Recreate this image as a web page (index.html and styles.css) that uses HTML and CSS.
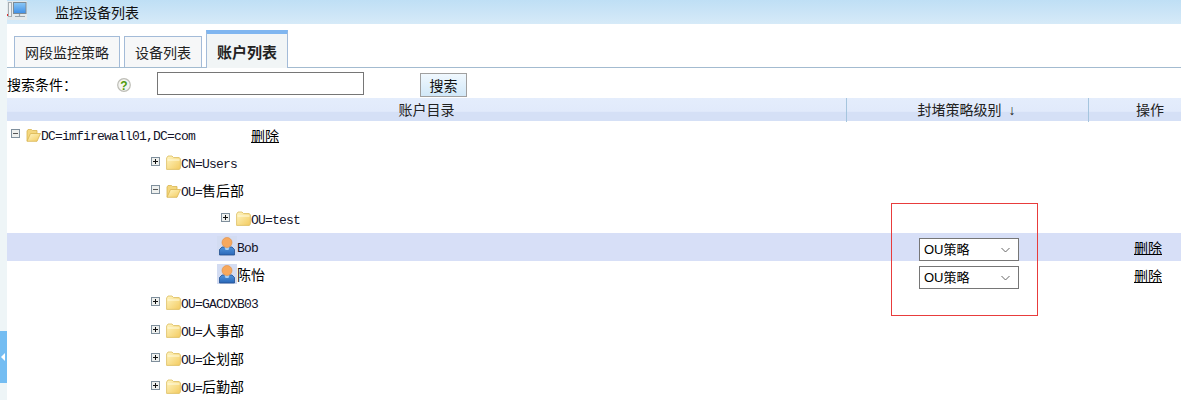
FILE: index.html
```html
<!DOCTYPE html>
<html lang="zh-CN">
<head>
  <meta charset="UTF-8">
  <title>监控设备列表</title>
  <link rel="stylesheet" href="styles.css">
</head>
<body>
  <svg class="defs" width="0" height="0">
    <defs>
      <linearGradient id="folderFill" x1="0" y1="0" x2="1" y2="1">
        <stop offset="0" stop-color="#fff6c4"/>
        <stop offset="1" stop-color="#f3cb60"/>
      </linearGradient>
      <linearGradient id="bodyFill" x1="0" y1="0" x2="0" y2="1">
        <stop offset="0" stop-color="#4f93dc"/>
        <stop offset="1" stop-color="#2a68b8"/>
      </linearGradient>
      <linearGradient id="screenFill" x1="0" y1="0" x2="0" y2="1">
        <stop offset="0" stop-color="#8cc8f6"/>
        <stop offset="1" stop-color="#3f8fe6"/>
      </linearGradient>
      <symbol id="i-plus" viewBox="0 0 9 9">
        <rect x="0.5" y="0.5" width="8" height="8" fill="#eef0ee" stroke="#7f8f9c"/>
        <path d="M2 4.500h5M4.500 2v5" stroke="#111" fill="none"/>
      </symbol>
      <symbol id="i-minus" viewBox="0 0 9 9">
        <rect x="0.5" y="0.5" width="8" height="8" fill="#eef0ee" stroke="#7f8f9c"/>
        <path d="M2 4.500h5" stroke="#555" fill="none"/>
      </symbol>
      <symbol id="i-folder" viewBox="0 0 15 15">
        <path d="M.6 14.400V3L2 1h4l1.500 1.500H13l1.400 1.200V13l-1 1.400z" fill="url(#folderFill)" stroke="#dcbc5e" stroke-width=".8"/>
        <path d="M1.500 5h12" stroke="#fffbe0" fill="none"/>
      </symbol>
      <symbol id="i-open" viewBox="0 0 15 15">
        <path d="M1 14V4l1-1.500h3.500l1 1H11v3" fill="#f4d77e" stroke="#d9b552" stroke-width=".8"/>
        <path d="M1 14.300L4.500 6.500h10l-3.500 7.800z" fill="url(#folderFill)" stroke="#d9b552" stroke-width=".8"/>
      </symbol>
      <symbol id="i-user" viewBox="0 0 20 20">
        <rect width="20" height="20" fill="#d3dcf2"/>
        <path d="M2.500 19v-5.500l2.500-2.500h10l2.500 2.500V19z" fill="url(#bodyFill)" stroke="#234f8e" stroke-width=".8"/>
        <path d="M7.500 11h5l-1 3h-3z" fill="#a8cdf0"/>
        <circle cx="10" cy="6.500" r="5" fill="#f7a95e" stroke="#e08c3e" stroke-width=".6"/>
      </symbol>
    </defs>
  </svg>

  <div class="side">
    <span class="side-tab"><span class="side-arrow"></span></span>
  </div>

  <div class="main">
    <div class="head">
      <svg class="head-icon" width="20" height="20" viewBox="0 0 20 20">
        <rect x="0" y="1" width="20" height="19" fill="#e3e9ec"/>
        <rect x="1.500" y="2.500" width="3" height="14" fill="#f1f2f2" stroke="#a5adb2"/>
        <rect x="0" y="14" width="1" height="2" fill="#d33"/>
        <rect x="6.500" y="2.500" width="12.500" height="11" fill="url(#screenFill)" stroke="#7d8b96"/>
        <path d="M12.500 14v2M8 16.500h10" stroke="#9aa4ab" stroke-width="1.200" fill="none"/>
      </svg>
      <span class="head-title">监控设备列表</span>
    </div>

    <div class="tabs">
      <a class="tab tab-wide">网段监控策略</a>
      <a class="tab">设备列表</a>
      <a class="tab tab-on">账户列表</a>
    </div>

    <form class="search">
      <label class="search-label">搜索条件：</label>
      <svg class="help" width="14" height="14" viewBox="0 0 14 14">
        <circle cx="7" cy="7" r="6.300" fill="#f4f4f0" stroke="#bdbdb6" stroke-width="1.200"/>
        <text x="7" y="11.500" class="help-mark">?</text>
      </svg>
      <input class="search-input" type="text">
      <button class="search-btn" type="button">搜索</button>
    </form>

    <div class="grid grid-head">
      <div class="th">账户目录</div>
      <div class="th th-level">封堵策略级别<span class="sort">↓</span></div>
      <div class="th th-action">操作</div>
    </div>

    <div class="grid row">
      <div class="node lv0">
        <svg class="exp"><use href="#i-minus"/></svg><svg class="folder"><use href="#i-open"/></svg><span class="name">DC=imfirewall01,DC=com</span>
        <a class="del del-root">删除</a>
      </div>
    </div>
    <div class="grid row">
      <div class="node lv1">
        <svg class="exp"><use href="#i-plus"/></svg><svg class="folder"><use href="#i-folder"/></svg><span class="name">CN=Users</span>
      </div>
    </div>
    <div class="grid row">
      <div class="node lv1">
        <svg class="exp"><use href="#i-minus"/></svg><svg class="folder"><use href="#i-open"/></svg><span class="name">OU=<span class="cn">售后部</span></span>
      </div>
    </div>
    <div class="grid row">
      <div class="node lv2">
        <svg class="exp"><use href="#i-plus"/></svg><svg class="folder"><use href="#i-folder"/></svg><span class="name">OU=test</span>
      </div>
    </div>
    <div class="grid row row-on">
      <div class="node lv-user">
        <svg class="user"><use href="#i-user"/></svg><span class="name">Bob</span>
      </div>
      <div class="level">
        <select class="policy"><option>OU策略</option></select>
      </div>
      <div class="action"><a class="del">删除</a></div>
    </div>
    <div class="grid row">
      <div class="node lv-user">
        <svg class="user"><use href="#i-user"/></svg><span class="name"><span class="cn">陈怡</span></span>
      </div>
      <div class="level">
        <select class="policy"><option>OU策略</option></select>
      </div>
      <div class="action"><a class="del">删除</a></div>
    </div>
    <div class="grid row">
      <div class="node lv1">
        <svg class="exp"><use href="#i-plus"/></svg><svg class="folder"><use href="#i-folder"/></svg><span class="name">OU=GACDXB03</span>
      </div>
    </div>
    <div class="grid row">
      <div class="node lv1">
        <svg class="exp"><use href="#i-plus"/></svg><svg class="folder"><use href="#i-folder"/></svg><span class="name">OU=<span class="cn">人事部</span></span>
      </div>
    </div>
    <div class="grid row">
      <div class="node lv1">
        <svg class="exp"><use href="#i-plus"/></svg><svg class="folder"><use href="#i-folder"/></svg><span class="name">OU=<span class="cn">企划部</span></span>
      </div>
    </div>
    <div class="grid row">
      <div class="node lv1">
        <svg class="exp"><use href="#i-plus"/></svg><svg class="folder"><use href="#i-folder"/></svg><span class="name">OU=<span class="cn">后勤部</span></span>
      </div>
    </div>

    <!-- red box drawn over the screenshot -->
    <div class="mark"></div>
  </div>
</body>
</html>
```

FILE: styles.css
```css
html, body {
  margin: 0;
  padding: 0;
  height: 400px;
  overflow: hidden;
}
body {
  display: flex;
  background-color: white;
  color: #000;
  font-family: "Noto Sans CJK SC", "Liberation Sans", sans-serif;
  font-size: 14px;
}
.defs {
  position: absolute;
}
.side {
  width: 7px;
  flex-shrink: 0;
  padding-top: 331px;
  box-sizing: border-box;
  background-color: #eef5f7;
}
.side-tab {
  display: flex;
  align-items: center;
  height: 52px;
  background-color: #74bdf2;
}
.side-arrow {
  width: 0;
  height: 0;
  margin-left: 1px;
  border-top: 4px solid transparent;
  border-bottom: 4px solid transparent;
  border-right: 4px solid white;
}
.main {
  position: relative;
  flex: 1;
  min-width: 0;
  overflow: hidden;
}
.head {
  display: flex;
  align-items: center;
  height: 24px;
  background: linear-gradient(#bfdff5, #d6eaf8);
}
.head-icon {
  flex-shrink: 0;
  align-self: flex-start;
}
.head-title {
  margin-left: 28px;
  line-height: 24px;
  color: #111;
}
.tabs {
  display: flex;
  align-items: flex-end;
  gap: 4px;
  height: 44px;
  padding-left: 7px;
  box-sizing: border-box;
  border-bottom: 1px solid #a3bbd0;
}
.tab {
  width: 78px;
  height: 31px;
  box-sizing: border-box;
  border: 1px solid #a3bbd8;
  border-bottom: none;
  background-color: #f6f7f8;
  text-align: center;
  line-height: 30px;
  color: #222;
}
.tab-wide {
  width: 106px;
}
.tab-on {
  width: 82px;
  height: 38px;
  margin-bottom: -1px;
  border-top: 4px solid #7fb6f0;
  background-color: #f1f5f6;
  font-size: 15px;
  font-weight: bold;
  line-height: 36px;
}
.search {
  display: flex;
  align-items: center;
  height: 30px;
  margin: 0;
}
.search-label {
  width: 110px;
  padding-top: 2px;
}
.help {
  margin-top: 3px;
}
.help-mark {
  font-family: "Liberation Sans", sans-serif;
  font-size: 12px;
  font-weight: bold;
  fill: #4f9a0c;
  text-anchor: middle;
}
.search-input {
  width: 207px;
  height: 23px;
  box-sizing: border-box;
  margin-left: 26px;
  padding: 1px 2px;
  border: 1px solid #767676;
  background-color: white;
}
.search-btn {
  width: 47px;
  height: 24px;
  margin: 3px 0 0 56px;
  padding: 0;
  border: 1px solid #a0a0a0;
  background: linear-gradient(#f0f8fe, #d2e8f8);
  font-family: inherit;
  font-size: 14px;
  color: #111;
}
.grid {
  display: grid;
  grid-template-columns: 840px 242px 92px;
}
.grid-head {
  height: 23px;
  background: linear-gradient(#e4edfc 0, #e1eafb 58%, #d5e0f6 62%, #d5e0f6 100%);
}
.th {
  line-height: 23px;
  text-align: center;
  color: #222;
  border-right: 1px solid #a5c5de;
}
.th-level {
  padding-right: 2px;
}
.th-action {
  border-right: none;
  text-align: left;
  padding-left: 47px;
}
.sort {
  margin-left: 7px;
  font-family: "Liberation Sans", sans-serif;
  font-size: 14px;
  font-weight: bold;
}
.row {
  height: 28px;
}
.row-on {
  background-color: #d7dff7;
}
.node {
  display: flex;
  align-items: center;
  height: 28px;
}
.lv0 {
  padding-left: 4px;
}
.lv1 {
  padding-left: 144px;
}
.lv2 {
  padding-left: 214px;
}
.lv-user {
  padding-left: 210px;
}
.exp {
  width: 9px;
  height: 9px;
  margin: -3px 6px 0 0;
  flex-shrink: 0;
}
.folder {
  width: 15px;
  height: 15px;
  margin-top: -2px;
  flex-shrink: 0;
}
.user {
  width: 20px;
  height: 20px;
  margin-top: -3px;
  flex-shrink: 0;
}
.name {
  margin-top: 3px;
  font-family: "Liberation Mono", "Noto Sans CJK SC", monospace;
  font-size: 13px;
  letter-spacing: -0.8px;
  line-height: 28px;
  color: #14142a;
  white-space: nowrap;
}
.cn {
  font-family: "Noto Sans CJK SC", sans-serif;
  font-size: 14px;
  letter-spacing: 0;
  line-height: 20px;
  color: #000;
}
.del {
  font-size: 14px;
  text-decoration: underline;
  color: #000;
}
.del-root {
  margin-left: 56px;
}
.level {
  display: flex;
  align-items: flex-end;
  padding-left: 72px;
}
.action {
  padding-left: 45px;
  line-height: 28px;
}
.policy {
  appearance: none;
  width: 100px;
  height: 23px;
  box-sizing: border-box;
  padding: 0 0 0 4px;
  border: 1px solid #767676;
  border-radius: 0;
  background: white url("data:image/svg+xml,%3Csvg xmlns='http://www.w3.org/2000/svg' width='9' height='6'%3E%3Cpath d='M.5 1l4 4 4-4' fill='none' stroke='%23666'/%3E%3C/svg%3E") no-repeat right 8px center;
  font-family: "Liberation Sans", "Noto Sans CJK SC", sans-serif;
  font-size: 13px;
  color: #000;
}
.mark {
  position: absolute;
  left: 884px;
  top: 203px;
  width: 145px;
  height: 111px;
  border: 1px solid #e83c3c;
}
```
